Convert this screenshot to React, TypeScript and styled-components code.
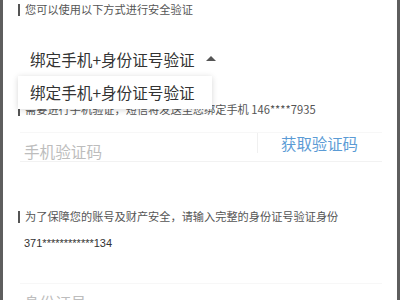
import React from 'react';
import styled, { createGlobalStyle } from 'styled-components';

const GlobalStyle = createGlobalStyle`
  html, body {
    margin: 0;
    padding: 0;
    background: #ffffff;
  }
  body {
    font-family: "Noto Sans CJK SC", "Noto Sans", "Liberation Sans", sans-serif;
  }
`;

const grey = '#555555';
const ink = '#333333';
const hint = '#bdbdbd';
const blue = '#5b9bd5';

const Frame = styled.div`
  box-sizing: border-box;
  width: 400px;
  height: 300px;
  overflow: hidden;
  border-left: 3px solid #5e5e5e;
  border-right: 3px solid #5e5e5e;
  padding-left: 15px;
  background: #ffffff;
`;

const Note = styled.div<{ top: number }>`
  display: flex;
  align-items: center;
  gap: 5px;
  margin-top: ${(p) => p.top}px;
  height: 13px;
  font-size: 11.2px;
  line-height: 13px;
  color: ${grey};
  white-space: nowrap;
`;

const Bar = styled.span`
  width: 2px;
  height: 12px;
  background: ${grey};
  flex: none;
`;

const SelectRow = styled.div`
  position: relative;
  margin-top: 32px;
  height: 22px;
  display: flex;
  align-items: center;
  padding-left: 12px;
  gap: 11px;
  font-size: 15.6px;
  line-height: 22px;
  color: ${ink};
`;

const Caret = styled.span`
  width: 0;
  height: 0;
  border-left: 5.5px solid transparent;
  border-right: 5.5px solid transparent;
  border-bottom: 5px solid ${grey};
  margin-top: -1px;
`;

const Menu = styled.div`
  position: absolute;
  left: 0;
  top: 28px;
  width: 194px;
  height: 33px;
  box-sizing: border-box;
  padding: 0 0 2px 12px;
  display: flex;
  align-items: center;
  background: #ffffff;
  box-shadow: 0 1px 6px rgba(0, 0, 0, 0.16);
  z-index: 2;
  font-size: 15.6px;
  color: ${ink};
`;

const Field = styled.div<{ top: number }>`
  margin-top: ${(p) => p.top}px;
  margin-left: 2px;
  width: 362px;
  height: 30px;
  display: flex;
  align-items: flex-start;
  border-top: 1px solid #f7f7f7;
  border-bottom: 1px solid #f2f2f2;
  box-sizing: border-box;
`;

const Placeholder = styled.span`
  flex: 1;
  padding: 7px 0 0 4px;
  font-size: 15.6px;
  line-height: 22px;
  color: ${hint};
`;

const Divider = styled.span`
  width: 1px;
  height: 20px;
  background: #f0f0f0;
`;

const CodeButton = styled.span`
  padding: 0 24px 0 23px;
  font-size: 15.4px;
  line-height: 20px;
  color: ${blue};
`;

const Masked = styled.div`
  margin-top: 13px;
  padding-left: 6px;
  font-family: "Liberation Sans", Arial, sans-serif;
  font-size: 11px;
  line-height: 14px;
  color: ${ink};
`;

export default function App() {
  return (
    <>
      <GlobalStyle />
      <Frame>
        <Note top={3}>
          <Bar />
          您可以使用以下方式进行安全验证
        </Note>

        <SelectRow>
          绑定手机+身份证号验证
          <Caret />
          <Menu>绑定手机+身份证号验证</Menu>
        </SelectRow>

        <Note top={33}>
          <Bar />
          需要进行手机验证，短信将发送至您绑定手机 146****7935
        </Note>

        <Field top={16}>
          <Placeholder>手机验证码</Placeholder>
          <Divider />
          <CodeButton>获取验证码</CodeButton>
        </Field>

        <Note top={48}>
          <Bar />
          为了保障您的账号及财产安全，请输入完整的身份证号验证身份
        </Note>

        <Masked>371************134</Masked>

        <Field top={33}>
          <Placeholder>身份证号</Placeholder>
        </Field>
      </Frame>
    </>
  );
}
